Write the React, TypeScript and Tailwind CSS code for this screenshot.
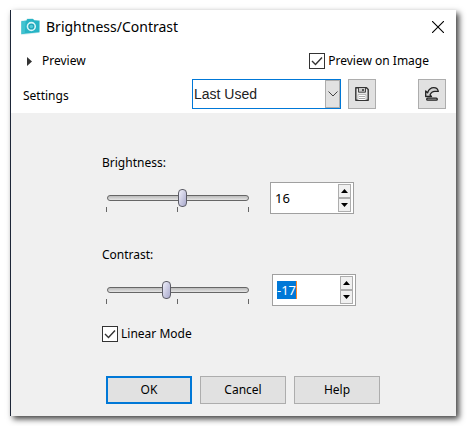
import React, { useEffect, useRef, useState } from 'react';

const CameraIcon = () => (
  <svg width="19" height="17" viewBox="0 0 18 16" aria-hidden="true">
    <path d="M0 2.5 L5 1.5 L5.5 .5 L11 0 L12 1.5 L18 2 L17.5 14 L10 15 L0 16 Z" fill="#d5eef1" />
    <path d="M.5 3 L5 2.5 L6 .8 H11.5 L12.5 2 L17.5 2.5 V13.5 L.5 15 Z" fill="#27b4c5" />
    <path d="M.5 3 L4.5 2.6 L3.5 14.5 L.5 15 Z" fill="#41c3d0" />
    <circle cx="9.8" cy="8" r="3.7" fill="#1fa3b8" stroke="#d9f6f8" strokeWidth="1.5" />
    <circle cx="9.8" cy="8" r="1.7" fill="#52cbd7" />
  </svg>
);

const SaveIcon = () => (
  <svg width="14" height="14" viewBox="0 0 14 14" fill="none" aria-hidden="true">
    <path d="M.8 .8 H11.5 L13.2 2.5 V13.2 H.8 Z" fill="#e8e8e8" stroke="#333" strokeWidth="1.4" strokeLinejoin="round" />
    <path d="M3.5 1 V5.2 H10.5 V1" fill="#c9c9c9" stroke="#444" />
    <path d="M8 2 V4" stroke="#222" strokeWidth="1.4" />
    <path d="M3 13 V7.5 H11 V13" fill="#fff" stroke="#bbb" />
    <path d="M4 9.5 H10 M4 11.5 H10" stroke="#aaa" />
  </svg>
);

const ResetIcon = () => (
  <svg width="14" height="14" viewBox="0 0 14 14" fill="none" aria-hidden="true">
    <path d="M.7 4 V9.5 H6.5 L5 7.9 C6 5.6 8 4.4 9.8 4.4 H13.3 C12.8 1.8 11 .7 8.8 .7 C5.6 .7 3.6 2.8 2.6 5.8 Z" fill="#d0d0d0" stroke="#222" strokeWidth="1.3" strokeLinejoin="round" />
    <rect x="1.7" y="11.2" width="10.6" height="2" rx="1" fill="#bbb" stroke="#222" strokeWidth="1.3" />
  </svg>
);

interface CheckProps {
  label: string;
  checked: boolean;
  onChange: (value: boolean) => void;
}

const Check: React.FC<CheckProps> = ({ label, checked, onChange }) => (
  <label className="flex items-center gap-[3px]">
    <span className="grid">
      <input
        type="checkbox"
        checked={checked}
        onChange={(e) => onChange(e.target.checked)}
        className="peer col-start-1 row-start-1 size-4 appearance-none border border-[#333] bg-white"
      />
      <svg viewBox="0 0 16 16" className="pointer-events-none invisible col-start-1 row-start-1 size-4 peer-checked:visible" aria-hidden="true">
        <path d="M3 8 L6.5 11.5 L13 4.5" fill="none" stroke="#333" strokeWidth="1.4" />
      </svg>
    </span>
    {label}
  </label>
);

interface AdjustmentProps {
  label: string;
  name: string;
  limit: number;
  value: number;
  onChange: (value: number) => void;
  active?: boolean;
}

const Adjustment: React.FC<AdjustmentProps> = ({ label, name, limit, value, onChange, active }) => {
  const inputRef = useRef<HTMLInputElement>(null);

  useEffect(() => {
    if (active) {
      inputRef.current?.focus();
      inputRef.current?.select();
    }
  }, [active]);

  const spinClass = 'flex h-[14px] w-[13px] items-center justify-center border border-[#adadad] bg-[#f0f0f0]';

  return (
    <div>
      <label htmlFor={name} className="block leading-[22px]">{label}</label>
      <div className={`flex items-start pt-2 pl-1 ${active ? 'gap-[23px]' : 'gap-[21px]'}`}>
        <div className="w-[143px] pt-[7px]">
          <input
            type="range"
            aria-label={label}
            min={-limit}
            max={limit}
            value={value}
            onChange={(e) => onChange(Number(e.target.value))}
            className="ml-px block h-[18px] w-[142px] appearance-none bg-transparent outline-none [&::-webkit-slider-runnable-track]:h-[6px] [&::-webkit-slider-runnable-track]:rounded-full [&::-webkit-slider-runnable-track]:border [&::-webkit-slider-runnable-track]:border-[#666] [&::-webkit-slider-runnable-track]:bg-linear-to-b [&::-webkit-slider-runnable-track]:from-[#bbb] [&::-webkit-slider-runnable-track]:to-[#e4e4e4] [&::-webkit-slider-thumb]:-mt-[7px] [&::-webkit-slider-thumb]:h-[18px] [&::-webkit-slider-thumb]:w-[9px] [&::-webkit-slider-thumb]:appearance-none [&::-webkit-slider-thumb]:rounded-[4px] [&::-webkit-slider-thumb]:border [&::-webkit-slider-thumb]:border-[#5c5c66] [&::-webkit-slider-thumb]:bg-linear-to-br [&::-webkit-slider-thumb]:from-[#f0f0fa] [&::-webkit-slider-thumb]:to-[#a9a9cc]"
          />
          <div className="flex justify-between">
            <span className="h-[5px] w-px bg-[#666]" />
            <span className="h-[5px] w-px bg-[#666]" />
            <span className="h-[5px] w-px bg-[#666]" />
          </div>
        </div>
        <div className="flex h-8 w-[84px] items-center border border-[#a0a0a0] bg-white pr-[2px] pl-1">
          <div className="relative flex min-w-0 flex-1">
            <input
              id={name}
              ref={inputRef}
              type="text"
              inputMode="numeric"
              value={value}
              onChange={(e) => onChange(Number(e.target.value) || 0)}
              className="h-[18px] w-full text-[13px] leading-[18px] outline-none selection:bg-[#0078d7] selection:text-white"
            />
            {active && <span className="absolute top-0 left-[19px] h-[18px] w-px bg-[#ff8728]" />}
          </div>
          <div className="flex flex-col">
            <button type="button" aria-label={`Increase ${name}`} className={spinClass} onClick={() => onChange(Math.min(limit, value + 1))}>
              <svg width="7" height="4" viewBox="0 0 7 4"><path d="M0 4 L3.5 0 L7 4 Z" /></svg>
            </button>
            <button type="button" aria-label={`Decrease ${name}`} className={spinClass} onClick={() => onChange(Math.max(-limit, value - 1))}>
              <svg width="7" height="4" viewBox="0 0 7 4"><path d="M0 0 L3.5 4 L7 0 Z" /></svg>
            </button>
          </div>
        </div>
      </div>
    </div>
  );
};

const App: React.FC = () => {
  const [preview, setPreview] = useState(true);
  const [linear, setLinear] = useState(true);
  const [brightness, setBrightness] = useState(16);
  const [contrast, setContrast] = useState(-17);

  const toolClass = 'flex h-[30px] w-[28px] items-center justify-center border border-[#adadad] bg-[#e1e1e1]';
  const buttonClass = 'h-7 w-[86px] bg-[#e1e1e1]';

  return (
    <div className="bg-white py-[10px] pr-[11px] pl-[10px] font-['Noto_Sans','Open_Sans',sans-serif] text-[12px] text-black">
      <main className="border-l border-[#1d2638] bg-[#f0f0f0] shadow-[3px_3px_6px_rgba(0,0,0,0.75)]">
        <header className="bg-white pb-1">
          <div className="flex h-[33px] items-center pr-3 pl-[10px]">
            <CameraIcon />
            <h1 className="ml-[6px] flex-1 text-[14px]">Brightness/Contrast</h1>
            <button type="button" aria-label="Close">
              <svg width="12" height="12" viewBox="0 0 12 12"><path d="M0 0 L12 12 M12 0 L0 12" stroke="#000" strokeWidth="1.1" /></svg>
            </button>
          </div>
          <div className="flex h-[36px] items-center justify-between pr-[27px] pl-4">
            <button type="button" className="flex items-center gap-[10px]">
              <svg width="5" height="9" viewBox="0 0 5 9"><path d="M0 0 L5 4.5 L0 9 Z" fill="#333" /></svg>
              Preview
            </button>
            <Check label="Preview on Image" checked={preview} onChange={setPreview} />
          </div>
          <div className="flex h-[30px] items-center pr-[10px] pl-3">
            <label htmlFor="preset" className="w-[169px] pt-1">Settings</label>
            <div className="grid w-[149px]">
              <select id="preset" className="col-start-1 row-start-1 h-[30px] w-full appearance-none border border-[#0078d7] bg-white pl-px font-['Liberation_Sans',Arial,sans-serif] text-[14px] text-[#222] outline-none">
                <option>Last Used</option>
                <option>Default</option>
              </select>
              <span className="pointer-events-none col-start-1 row-start-1 m-px flex w-[15px] items-center justify-center justify-self-end border border-[#adadad] bg-[#e1e1e1]">
                <svg width="10" height="6" viewBox="0 0 10 6"><path d="M.5 .5 L5 5 L9.5 .5" fill="none" stroke="#444" /></svg>
              </span>
            </div>
            <button type="button" aria-label="Save preset" className={`ml-[7px] ${toolClass}`}><SaveIcon /></button>
            <button type="button" aria-label="Reset to default" className={`ml-auto ${toolClass}`}><ResetIcon /></button>
          </div>
        </header>

        <section className="pt-[39px] pb-3 pl-[91px]">
          <Adjustment label="Brightness:" name="brightness" limit={255} value={brightness} onChange={setBrightness} />
          <div className="pt-[30px] pb-[19px]">
            <Adjustment label="Contrast:" name="contrast" limit={100} value={contrast} onChange={setContrast} active />
          </div>
          <Check label="Linear Mode" checked={linear} onChange={setLinear} />
          <div className="flex gap-2 pt-[33px] pl-1">
            <button type="button" className={`${buttonClass} border-2 border-[#0078d7]`}>OK</button>
            <button type="button" className={`${buttonClass} border border-[#adadad]`}>Cancel</button>
            <button type="button" className={`${buttonClass} border border-[#adadad]`}>Help</button>
          </div>
        </section>
      </main>
    </div>
  );
};

export default App;
